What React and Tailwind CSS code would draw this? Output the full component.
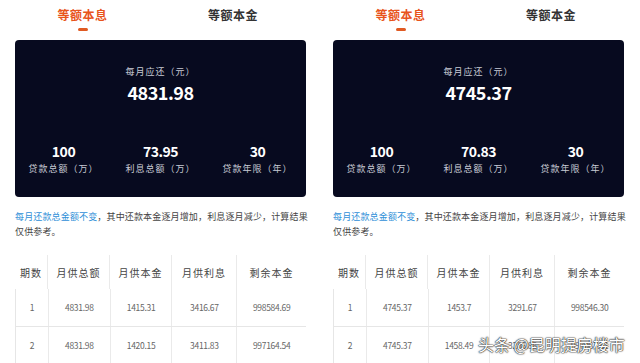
const panels = [
  {
    monthly: "4831.98",
    interest: "73.95",
    rows: [
      ["1", "4831.98", "1415.31", "3416.67", "998584.69"],
      ["2", "4831.98", "1420.15", "3411.83", "997164.54"],
    ],
  },
  {
    monthly: "4745.37",
    interest: "70.83",
    rows: [
      ["1", "4745.37", "1453.7", "3291.67", "998546.30"],
      ["2", "4745.37", "1458.49", "3286.88", "997087.81"],
    ],
  },
];

const cols = ["w-[32px]", "w-[62px]", "w-[62px]", "w-[65px]", "w-[70px]"];
const heads = ["期数", "月供总额", "月供本金", "月供利息", "剩余本金"];

function Panel({ data }) {
  return (
    <div className="w-[291px] flex flex-col">
      <div className="flex h-[40px]">
        <div className="w-[135px] flex flex-col items-center pt-[7px]">
          <span className="text-[12px] leading-[15px] font-bold text-[#e8541c] tracking-[0.5px]">等额本息</span>
          <span className="mt-[6px] w-[10px] h-[3px] rounded-full bg-[#e05a22]"></span>
        </div>
        <div className="flex-1 flex justify-center pt-[7px] pl-[10px]">
          <span className="text-[12px] leading-[15px] font-bold text-[#333] tracking-[0.5px]">等额本金</span>
        </div>
      </div>
      <div className="h-[157px] rounded-[4px] bg-[#070a1f] text-white flex flex-col items-center">
        <div className="mt-[26px] text-[9px] leading-[12px] text-[#c9ccd6] tracking-[1px]">每月应还（元）</div>
        <div className="mt-[3px] text-[18px] leading-[22px] font-bold tracking-[-0.5px]">{data.monthly}</div>
        <div className="mt-[40px] w-full grid grid-cols-3">
          {[
            ["100", "贷款总额（万）"],
            [data.interest, "利息总额（万）"],
            ["30", "贷款年限（年）"],
          ].map(([v, l]) => (
            <div key={l} className="flex flex-col items-center">
              <span className="text-[14px] leading-[16px] font-bold tracking-[-0.5px]">{v}</span>
              <span className="mt-[4px] text-[9px] leading-[12px] text-[#c9ccd6] tracking-[1px]">{l}</span>
            </div>
          ))}
        </div>
      </div>
      <p className="mt-[12px] w-[300px] text-[9px] leading-[15px] text-[#444] tracking-[0.15px]">
        <span className="text-[#2f8fd8]">每月还款总金额不变</span>，其中还款本金逐月增加，利息逐月减少，计算结果仅供参考。
      </p>
      <div className="mt-[16px] flex flex-col">
        <div className="flex h-[34px] items-center">
          {heads.map((h, i) => (
            <div key={h} className={`${cols[i]} h-full flex items-center justify-center text-[10px] text-[#444] tracking-[1px] ${i > 0 ? "border-l border-[#eaeaea]" : ""}`}>{h}</div>
          ))}
        </div>
        {data.rows.map((r, ri) => (
          <div key={ri} className={`flex h-[37px] border-l border-[#e6e6e6] ${ri > 0 ? "border-t" : ""}`}>
            {r.map((c, i) => (
              <div key={i} className={`${cols[i]} h-full flex items-center justify-center text-[8.5px] text-[#666] tracking-[-0.3px] ${i > 0 ? "border-l border-[#eaeaea]" : ""}`}>{c}</div>
            ))}
          </div>
        ))}
      </div>
    </div>
  );
}

export default function App() {
  return (
    <div className="relative w-[640px] h-[363px] overflow-hidden bg-white" style={{ fontFamily: '"Noto Sans CJK SC", "Liberation Sans", sans-serif' }}>
      <div className="flex gap-[27px] pl-[15px]">
        {panels.map((p, i) => (
          <Panel key={i} data={p} />
        ))}
      </div>
      <div
        className="absolute left-[478px] top-[333px] text-[16px] leading-[22px] text-white whitespace-nowrap"
        style={{ textShadow: "0 0 1px #222, 0 0 1px #222, 0 0 2px #444" }}
      >
        头条 @昆明提房楼市
      </div>
    </div>
  );
}
